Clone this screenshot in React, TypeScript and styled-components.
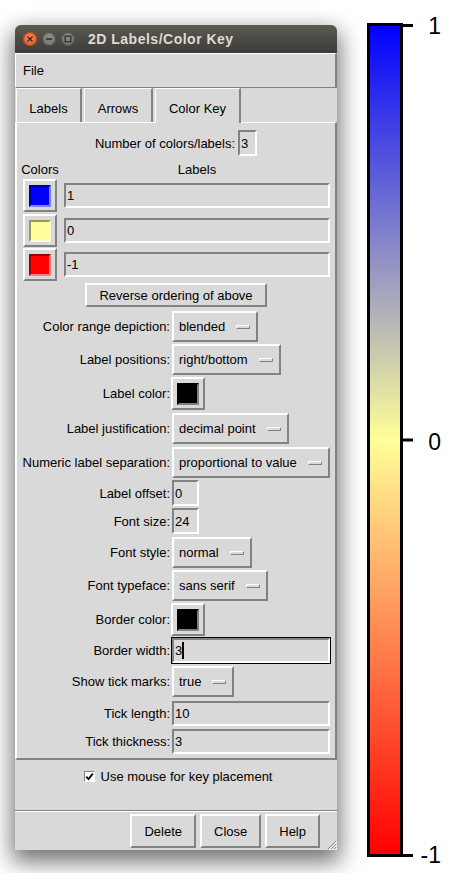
import React from 'react';
import styled, { createGlobalStyle, css } from 'styled-components';

const BG = '#d9d9d9';
const LIGHT = '#ffffff';
const DARK = '#828282';
const FONT = `"Liberation Sans", Arial, Helvetica, sans-serif`;

const Global = createGlobalStyle`
  html, body { margin: 0; padding: 0; background: #fff; }
  body { font-family: ${FONT}; }
`;

const raised = css`
  border-style: solid;
  border-color: ${LIGHT} ${DARK} ${DARK} ${LIGHT};
`;
const sunken = css`
  border-style: solid;
  border-color: ${DARK} ${LIGHT} ${LIGHT} ${DARK};
`;

const Page = styled.div`
  width: 449px;
  height: 873px;
  display: flex;
  align-items: flex-start;
  overflow: hidden;
  background: #fff;
`;

const Window = styled.div`
  margin: 25px 0 0 15px;
  width: 322px;
  height: 825px;
  flex: none;
  display: flex;
  flex-direction: column;
  background: ${BG};
  border-radius: 6px 6px 0 0;
  box-shadow: 0 9px 22px 3px rgba(0, 0, 0, 0.55);
  font-family: ${FONT};
  font-size: 13px;
  color: #000;
  position: relative;
`;

const TitleBar = styled.div`
  height: 28px;
  flex: none;
  display: flex;
  align-items: center;
  padding-left: 8px;
  border-radius: 6px 6px 0 0;
  background: linear-gradient(#5b5952, #3d3c38);
`;

const WinButtons = styled.div`
  display: flex;
  gap: 5px;
`;

const WinBtn = styled.div<{ $kind: 'close' | 'min' | 'max' }>`
  width: 14px;
  height: 14px;
  border-radius: 50%;
  display: flex;
  align-items: center;
  justify-content: center;
  box-sizing: border-box;
  background: ${(p) =>
    p.$kind === 'close'
      ? 'radial-gradient(circle at 50% 35%, #f6875a, #e2511e)'
      : 'radial-gradient(circle at 50% 35%, #8e8c86, #6d6c67)'};
  box-shadow: inset 0 0 0 1px ${(p) => (p.$kind === 'close' ? '#b4421a' : '#4c4b47')};
`;

const Title = styled.div`
  margin-left: 13px;
  color: #dfdbd2;
  font-weight: bold;
  font-size: 14px;
  letter-spacing: 0.5px;
  white-space: nowrap;
`;

const MenuBar = styled.div`
  height: 35px;
  flex: none;
  box-sizing: border-box;
  border-top: 1px solid ${LIGHT};
  border-bottom: 1px solid ${DARK};
  border-right: 2px solid ${DARK};
  border-left: 1px solid ${LIGHT};
  display: flex;
  align-items: center;
  padding-left: 7px;
`;

const TabRow = styled.div`
  height: 34px;
  flex: none;
  display: flex;
  align-items: flex-end;
  padding-left: 1px;
  gap: 2px;
  position: relative;
  z-index: 1;
`;

const Tab = styled.div<{ $w: number; $selected?: boolean }>`
  width: ${(p) => p.$w}px;
  height: ${(p) => (p.$selected ? 35 : 34)}px;
  margin-bottom: ${(p) => (p.$selected ? -1 : 0)}px;
  box-sizing: border-box;
  border-top: 1px solid ${LIGHT};
  border-left: 1px solid ${LIGHT};
  border-right: 2px solid ${DARK};
  background: ${BG};
  display: flex;
  align-items: center;
  justify-content: center;
  padding-top: ${(p) => (p.$selected ? 4 : 5)}px;
`;

const Panel = styled.div`
  height: 638px;
  flex: none;
  box-sizing: border-box;
  border-top: 1px solid ${LIGHT};
  border-left: 2px solid ${LIGHT};
  border-right: 2px solid ${DARK};
  border-bottom: 2px solid ${DARK};
  padding-top: 7px;
  display: flex;
  flex-direction: column;
`;

const CenterRow = styled.div<{ $mt: number }>`
  display: flex;
  align-items: center;
  justify-content: center;
  gap: 3px;
  margin-top: ${(p) => p.$mt}px;
`;

const ColorGrid = styled.div<{ $mt: number }>`
  display: grid;
  grid-template-columns: 46px 266px;
  column-gap: 1px;
  align-items: center;
  justify-items: center;
  margin-top: ${(p) => p.$mt}px;
`;

const FormRow = styled.div<{ $mt: number }>`
  display: grid;
  grid-template-columns: 153px auto;
  column-gap: 2px;
  align-items: center;
  justify-items: start;
  margin-top: ${(p) => p.$mt}px;
`;

const FieldLabel = styled.div`
  justify-self: end;
  white-space: nowrap;
`;

const Entry = styled.div<{ $w: number; $h?: number; $focused?: boolean }>`
  box-sizing: border-box;
  width: ${(p) => p.$w}px;
  height: ${(p) => p.$h ?? 25}px;
  border-width: 2px;
  ${sunken};
  background: ${BG};
  padding-left: 1px;
  display: flex;
  align-items: center;
  white-space: nowrap;
  ${(p) => p.$focused && css`outline: 1px solid #000;`}
`;

const Caret = styled.span`
  display: inline-block;
  width: 2px;
  height: 17px;
  background: #000;
`;

const MenuButton = styled.div`
  box-sizing: border-box;
  height: 31px;
  border-width: 2px;
  ${raised};
  display: inline-flex;
  align-items: center;
  padding: 0 6px 0 5px;
  gap: 11px;
  background: ${BG};
  white-space: nowrap;
`;

const Indicator = styled.span`
  box-sizing: border-box;
  width: 14px;
  height: 4px;
  border-width: 1px;
  ${raised};
  background: ${BG};
`;

const SwatchButton = styled.div<{ $shift?: number }>`
  box-sizing: border-box;
  width: 34px;
  height: 33px;
  border-width: 2px;
  ${raised};
  display: flex;
  align-items: center;
  justify-content: center;
  background: ${BG};
  margin-left: ${(p) => p.$shift ?? 0}px;
`;

const Swatch = styled.div<{ $c: string; $dark: string; $light: string }>`
  box-sizing: border-box;
  width: 22px;
  height: 22px;
  border-width: 2px;
  border-style: solid;
  border-color: ${(p) => p.$dark} ${(p) => p.$light} ${(p) => p.$light} ${(p) => p.$dark};
  background: ${(p) => p.$c};
`;

const PushButton = styled.div<{ $h: number }>`
  box-sizing: border-box;
  height: ${(p) => p.$h}px;
  border-width: 2px;
  ${raised};
  padding: 0 12px;
  display: inline-flex;
  align-items: center;
  justify-content: center;
  background: ${BG};
  white-space: nowrap;
`;

const HeaderText = styled.div`
  height: 18px;
  display: flex;
  align-items: center;
`;

const CheckArea = styled.div`
  height: 51px;
  flex: none;
  box-sizing: border-box;
  border-bottom: 1px solid ${DARK};
  display: flex;
  align-items: flex-start;
  justify-content: center;
  padding: 8px 0 0 4px;
  gap: 6px;
`;

const CheckLine = styled.div`
  display: flex;
  align-items: center;
  gap: 6px;
  height: 16px;
`;

const CheckBox = styled.span`
  box-sizing: border-box;
  width: 11px;
  height: 11px;
  border-width: 1px;
  ${sunken};
  background: #fff;
  display: flex;
  align-items: center;
  justify-content: center;
`;

const ButtonBar = styled.div`
  flex: 1;
  box-sizing: border-box;
  border-top: 1px solid ${LIGHT};
  display: flex;
  justify-content: flex-end;
  align-items: flex-start;
  gap: 4px;
  padding: 2px 17px 0 0;
`;

const Grip = styled.svg`
  position: absolute;
  right: 0;
  bottom: 0;
`;

const KeyCanvas = styled.svg`
  flex: none;
  margin-left: 3px;
`;

const TitleButtons = () => (
  <WinButtons>
    <WinBtn $kind="close">
      <svg width="8" height="8" viewBox="0 0 8 8">
        <path d="M1.5 1.5 L6.5 6.5 M6.5 1.5 L1.5 6.5" stroke="#3a2a22" strokeWidth="1.4" />
      </svg>
    </WinBtn>
    <WinBtn $kind="min">
      <svg width="8" height="8" viewBox="0 0 8 8">
        <path d="M1 4 L7 4" stroke="#2f2e2b" strokeWidth="1.5" />
      </svg>
    </WinBtn>
    <WinBtn $kind="max">
      <svg width="8" height="8" viewBox="0 0 8 8">
        <rect x="1.2" y="1.2" width="5.6" height="5.6" fill="none" stroke="#2f2e2b" strokeWidth="1.3" />
      </svg>
    </WinBtn>
  </WinButtons>
);

const colorRows = [
  { c: '#0000ff', dark: '#000099', light: '#8080ff', label: '1', mt: 1 },
  { c: '#ffff99', dark: '#99995c', light: '#ffffd6', label: '0', mt: 2 },
  { c: '#ff0000', dark: '#990000', light: '#ff8080', label: '-1', mt: 1 },
];

const Menu = ({ value }: { value: string }) => (
  <MenuButton>
    <span>{value}</span>
    <Indicator />
  </MenuButton>
);

const BlackSwatch = () => (
  <SwatchButton $shift={-1}>
    <Swatch $c="#000000" $dark="#000000" $light="#808080" />
  </SwatchButton>
);

export default function App() {
  return (
    <Page>
      <Global />
      <Window>
        <TitleBar>
          <TitleButtons />
          <Title>2D Labels/Color Key</Title>
        </TitleBar>
        <MenuBar>File</MenuBar>
        <TabRow>
          <Tab $w={66}>Labels</Tab>
          <Tab $w={69}>Arrows</Tab>
          <Tab $w={86} $selected>
            Color Key
          </Tab>
        </TabRow>
        <Panel>
          <CenterRow $mt={0}>
            <span>Number of colors/labels:</span>
            <Entry $w={19} $h={26}>3</Entry>
          </CenterRow>
          <ColorGrid $mt={4}>
            <HeaderText>Colors</HeaderText>
            <HeaderText>Labels</HeaderText>
          </ColorGrid>
          {colorRows.map((r) => (
            <ColorGrid $mt={r.mt} key={r.label}>
              <SwatchButton>
                <Swatch $c={r.c} $dark={r.dark} $light={r.light} />
              </SwatchButton>
              <Entry $w={266}>{r.label}</Entry>
            </ColorGrid>
          ))}
          <CenterRow $mt={2}>
            <PushButton $h={24}>Reverse ordering of above</PushButton>
          </CenterRow>
          <FormRow $mt={4}>
            <FieldLabel>Color range depiction:</FieldLabel>
            <Menu value="blended" />
          </FormRow>
          <FormRow $mt={2}>
            <FieldLabel>Label positions:</FieldLabel>
            <Menu value="right/bottom" />
          </FormRow>
          <FormRow $mt={2}>
            <FieldLabel>Label color:</FieldLabel>
            <BlackSwatch />
          </FormRow>
          <FormRow $mt={3}>
            <FieldLabel>Label justification:</FieldLabel>
            <Menu value="decimal point" />
          </FormRow>
          <FormRow $mt={3}>
            <FieldLabel>Numeric label separation:</FieldLabel>
            <Menu value="proportional to value" />
          </FormRow>
          <FormRow $mt={2}>
            <FieldLabel>Label offset:</FieldLabel>
            <Entry $w={27} $h={26}>0</Entry>
          </FormRow>
          <FormRow $mt={2}>
            <FieldLabel>Font size:</FieldLabel>
            <Entry $w={27} $h={26}>24</Entry>
          </FormRow>
          <FormRow $mt={3}>
            <FieldLabel>Font style:</FieldLabel>
            <Menu value="normal" />
          </FormRow>
          <FormRow $mt={2}>
            <FieldLabel>Font typeface:</FieldLabel>
            <Menu value="sans serif" />
          </FormRow>
          <FormRow $mt={2}>
            <FieldLabel>Border color:</FieldLabel>
            <BlackSwatch />
          </FormRow>
          <FormRow $mt={2}>
            <FieldLabel>Border width:</FieldLabel>
            <Entry $w={158} $h={25} $focused>
              3<Caret />
            </Entry>
          </FormRow>
          <FormRow $mt={3}>
            <FieldLabel>Show tick marks:</FieldLabel>
            <Menu value="true" />
          </FormRow>
          <FormRow $mt={4}>
            <FieldLabel>Tick length:</FieldLabel>
            <Entry $w={158}>10</Entry>
          </FormRow>
          <FormRow $mt={3}>
            <FieldLabel>Tick thickness:</FieldLabel>
            <Entry $w={158}>3</Entry>
          </FormRow>
        </Panel>
        <CheckArea>
          <CheckLine>
            <CheckBox>
              <svg width="9" height="9" viewBox="0 0 9 9">
                <path d="M1.3 4.6 L3.5 7 L7.8 1.6" fill="none" stroke="#000" strokeWidth="1.8" />
              </svg>
            </CheckBox>
            <span>Use mouse for key placement</span>
          </CheckLine>
        </CheckArea>
        <ButtonBar>
          <PushButton $h={34}>Delete</PushButton>
          <PushButton $h={34}>Close</PushButton>
          <PushButton $h={34}>Help</PushButton>
        </ButtonBar>
        <Grip width="12" height="12" viewBox="0 0 12 12">
          <path d="M11 3 L3 11 M11 6 L6 11 M11 9 L9 11" stroke="#8a8a8a" strokeWidth="1" />
          <path d="M12 4 L4 12 M12 7 L7 12 M12 10 L10 12" stroke="#ffffff" strokeWidth="1" />
        </Grip>
      </Window>
      <KeyCanvas width="109" height="873" viewBox="0 0 109 873">
        <defs>
          <linearGradient id="keyGrad" x1="0" y1="0" x2="0" y2="1">
            <stop offset="0" stopColor="#0000ff" />
            <stop offset="0.5" stopColor="#ffff99" />
            <stop offset="1" stopColor="#ff0000" />
          </linearGradient>
        </defs>
        <rect x="28.5" y="24.5" width="33" height="831" fill="url(#keyGrad)" stroke="#000" strokeWidth="3" />
        <line x1="63" y1="25.5" x2="73" y2="25.5" stroke="#000" strokeWidth="3" />
        <line x1="63" y1="440" x2="73" y2="440" stroke="#000" strokeWidth="3" />
        <line x1="63" y1="855.5" x2="73" y2="855.5" stroke="#000" strokeWidth="3" />
        <g fontFamily={FONT} fontSize="23" textAnchor="end" fill="#000">
          <text x="101" y="34">1</text>
          <text x="101" y="449.5">0</text>
          <text x="101" y="863">-1</text>
        </g>
      </KeyCanvas>
    </Page>
  );
}
